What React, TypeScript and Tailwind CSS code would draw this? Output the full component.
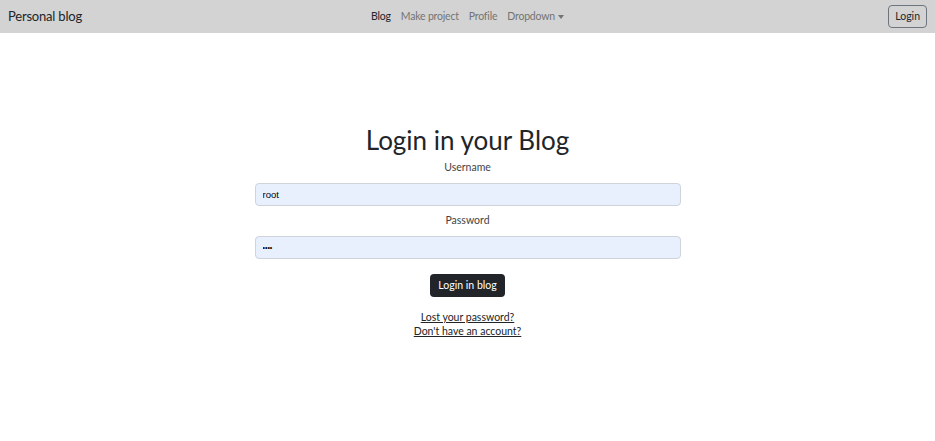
import { useState } from 'react';

const font = { fontFamily: 'Lato, "Open Sans", sans-serif' };

function Navbar() {
  return (
    <nav className="h-[33px] bg-[#d3d3d3] flex items-center px-2" style={font}>
      <a className="text-[13px] tracking-[-0.2px] text-[#212529] w-[200px] leading-none">Personal blog</a>
      <ul className="flex-1 flex justify-center items-center gap-[10px] text-[10.5px] tracking-[-0.2px] text-[#737373]">
        <li className="text-[#212529]">Blog</li>
        <li>Make project</li>
        <li>Profile</li>
        <li className="flex items-center gap-[3px]">
          Dropdown
          <span className="inline-block w-0 h-0 border-x-[3.5px] border-x-transparent border-t-[4px] border-t-[#737373]" />
        </li>
      </ul>
      <div className="w-[200px] flex justify-end">
        <button className="h-[23px] px-[6px] text-[10.5px] text-[#212529] border border-[#6c757d] rounded-[4px]">
          Login
        </button>
      </div>
    </nav>
  );
}

export default function App() {
  const [username, setUsername] = useState('root');
  const [password, setPassword] = useState('root');

  return (
    <div className="min-h-[441px] bg-white">
      <Navbar />
      <main className="w-[426px] mx-auto pt-[87px] flex flex-col items-center text-[#212529]" style={font}>
        <h1 className="text-[26px] leading-[40px] font-normal">Login in your Blog</h1>
        <label className="text-[10.5px] text-[#444] mt-[-1px] leading-[16px]">Username</label>
        <input
          value={username}
          onChange={(e) => setUsername(e.target.value)}
          className="mt-[8px] w-full h-[23px] px-[7px] bg-[#e8f0fe] border border-[#ced4da] rounded-[4px] text-[9.5px] text-black outline-none"
          style={{ fontFamily: '"Liberation Sans", Arial, sans-serif' }}
        />
        <label className="text-[10.5px] text-[#444] mt-[6px] leading-[16px]">Password</label>
        <input
          type="password"
          value={password}
          onChange={(e) => setPassword(e.target.value)}
          className="mt-[8px] w-full h-[23px] px-[7px] bg-[#e8f0fe] border border-[#ced4da] rounded-[4px] text-[7px] text-black outline-none"
          style={{ fontFamily: '"Liberation Sans", Arial, sans-serif' }}
        />
        <button className="mt-[15px] h-[23px] px-[8px] bg-[#212529] text-white text-[10.5px] rounded-[4px]">
          Login in blog
        </button>
        <div className="mt-[13px] flex flex-col items-center text-[10.5px] leading-[14px] text-[#212529]">
          <a className="underline">Lost your password?</a>
          <a className="underline">Don't have an account?</a>
        </div>
      </main>
    </div>
  );
}
